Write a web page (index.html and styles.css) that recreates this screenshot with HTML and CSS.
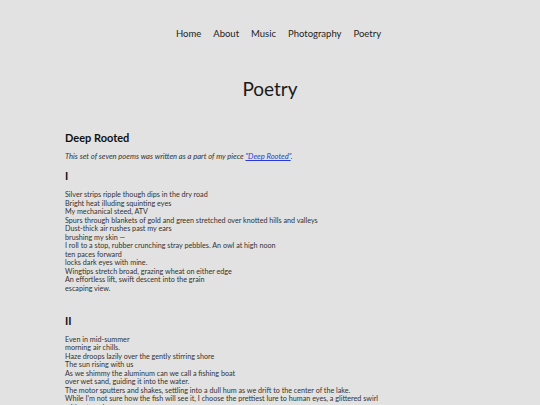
FILE: index.html
```html
<!DOCTYPE html>
<html lang="en">
<head>
    <meta charset="UTF-8">
    <meta name="viewport" content="width=device-width, initial-scale=1.0">
    <title>Poetry</title>
    <link rel="stylesheet" href="styles.css">
</head>
<body>
    <nav class="site-nav">
        <a href="#">Home</a>
        <a href="#">About</a>
        <a href="#">Music</a>
        <a href="#">Photography</a>
        <a href="#">Poetry</a>
    </nav>

    <h1 class="page-title">Poetry</h1>

    <main class="content">
        <h2 class="collection-title">Deep Rooted</h2>
        <p class="intro">This set of seven poems was written as a part of my piece <a href="#">"Deep Rooted"</a>.</p>

        <!-- Poem I -->
        <h3 class="poem-number">I</h3>
        <p class="poem">
            Silver strips ripple though dips in the dry road<br>
            Bright heat illuding squinting eyes<br>
            My mechanical steed, ATV<br>
            Spurs through blankets of gold and green stretched over knotted hills and valleys<br>
            Dust-thick air rushes past my ears<br>
            brushing my skin —<br>
            I roll to a stop, rubber crunching stray pebbles. An owl at high noon<br>
            ten paces forward<br>
            locks dark eyes with mine.<br>
            Wingtips stretch broad, grazing wheat on either edge<br>
            An effortless lift, swift descent into the grain<br>
            escaping view.
        </p>

        <!-- Poem II -->
        <h3 class="poem-number">II</h3>
        <p class="poem">
            Even in mid-summer<br>
            morning air chills.<br>
            Haze droops lazily over the gently stirring shore<br>
            The sun rising with us<br>
            As we shimmy the aluminum can we call a fishing boat<br>
            over wet sand, guiding it into the water.<br>
            The motor sputters and shakes, settling into a dull hum as we drift to the center of the lake.<br>
            While I'm not sure how the fish will see it, I choose the prettiest lure to human eyes, a glittered swirl<br>
            with a tassel.
        </p>
    </main>
</body>
</html>
```

FILE: styles.css
```css
body {
    font-family: Lato, "Open Sans", sans-serif;
    margin: 0;
    padding: 0;
    background: #e2e2e2;
    color: #333;
}
.site-nav {
    display: flex;
    justify-content: center;
    gap: 12px;
    padding: 28px 0 0 17px;
    font-size: 9.5px;
}
.site-nav a {
    color: #222;
    text-decoration: none;
}
.page-title {
    margin: 38px 0 0;
    text-align: center;
    font-size: 19px;
    font-weight: 400;
    color: #1a1a1a;
}
.content {
    padding: 0 65px;
    margin-top: 31px;
}
.collection-title {
    margin: 0;
    font-size: 11px;
    font-weight: 700;
    color: #111;
}
.intro {
    margin: 7px 0 0;
    font-size: 7.6px;
    font-style: italic;
}
.intro a {
    color: #2a3ad6;
}
.poem-number {
    margin: 8px 0 0;
    font-size: 11px;
    font-weight: 700;
    color: #111;
}
.poem {
    margin: 9px 0 0;
    font-size: 7.2px;
    line-height: 8.55px;
}
.poem + .poem-number {
    margin-top: 20px;
}
```
